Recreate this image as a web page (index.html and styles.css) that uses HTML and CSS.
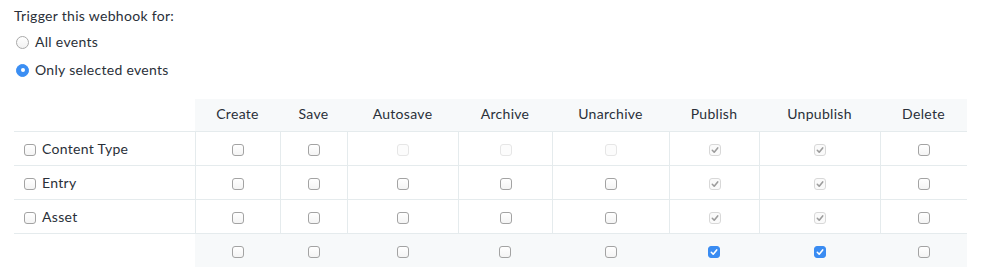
FILE: index.html
```html
<!DOCTYPE html>
<html>
<head>
<meta charset="utf-8">
<link rel="stylesheet" href="styles.css">
</head>
<body>
<div class="page">
  <div class="title">Trigger this webhook for:</div>
  <div class="radios">
    <label class="radio-row"><span class="radio"></span>All events</label>
    <label class="radio-row"><span class="radio on"></span>Only selected events</label>
  </div>
  <table class="grid">
    <colgroup>
      <col class="c-label"><col class="c-create"><col class="c-save"><col class="c-autosave"><col class="c-archive"><col class="c-unarchive"><col class="c-publish"><col class="c-unpublish"><col class="c-delete">
    </colgroup>
    <thead>
      <tr>
        <th class="blank"></th>
        <th>Create</th><th>Save</th><th>Autosave</th><th>Archive</th><th>Unarchive</th><th>Publish</th><th>Unpublish</th><th>Delete</th>
      </tr>
    </thead>
    <tbody>
      <tr>
        <td class="name"><span class="cb"></span>Content Type</td>
        <td><span class="cb"></span></td>
        <td><span class="cb"></span></td>
        <td><span class="cb dis"></span></td>
        <td><span class="cb dis"></span></td>
        <td><span class="cb dis"></span></td>
        <td><span class="cb dchk"><svg viewBox="0 0 12 12"><path d="M3.3 6.3 L5.2 8.2 L8.7 3.9"/></svg></span></td>
        <td><span class="cb dchk"><svg viewBox="0 0 12 12"><path d="M3.3 6.3 L5.2 8.2 L8.7 3.9"/></svg></span></td>
        <td><span class="cb"></span></td>
      </tr>
      <tr>
        <td class="name"><span class="cb"></span>Entry</td>
        <td><span class="cb"></span></td>
        <td><span class="cb"></span></td>
        <td><span class="cb"></span></td>
        <td><span class="cb"></span></td>
        <td><span class="cb"></span></td>
        <td><span class="cb dchk"><svg viewBox="0 0 12 12"><path d="M3.3 6.3 L5.2 8.2 L8.7 3.9"/></svg></span></td>
        <td><span class="cb dchk"><svg viewBox="0 0 12 12"><path d="M3.3 6.3 L5.2 8.2 L8.7 3.9"/></svg></span></td>
        <td><span class="cb"></span></td>
      </tr>
      <tr>
        <td class="name"><span class="cb"></span>Asset</td>
        <td><span class="cb"></span></td>
        <td><span class="cb"></span></td>
        <td><span class="cb"></span></td>
        <td><span class="cb"></span></td>
        <td><span class="cb"></span></td>
        <td><span class="cb dchk"><svg viewBox="0 0 12 12"><path d="M3.3 6.3 L5.2 8.2 L8.7 3.9"/></svg></span></td>
        <td><span class="cb dchk"><svg viewBox="0 0 12 12"><path d="M3.3 6.3 L5.2 8.2 L8.7 3.9"/></svg></span></td>
        <td><span class="cb"></span></td>
      </tr>
      <tr class="foot">
        <td class="name"></td>
        <td><span class="cb"></span></td>
        <td><span class="cb"></span></td>
        <td><span class="cb"></span></td>
        <td><span class="cb"></span></td>
        <td><span class="cb"></span></td>
        <td><span class="cb chk"><svg viewBox="0 0 12 12"><path d="M3.3 6.3 L5.2 8.2 L8.7 3.9"/></svg></span></td>
        <td><span class="cb chk"><svg viewBox="0 0 12 12"><path d="M3.3 6.3 L5.2 8.2 L8.7 3.9"/></svg></span></td>
        <td><span class="cb"></span></td>
      </tr>
    </tbody>
  </table>
</div>
</body>
</html>
```
FILE: styles.css
```css
html, body {
  margin: 0;
  padding: 0;
  background: #ffffff;
}
body {
  font-family: Lato, "Open Sans", "Liberation Sans", sans-serif;
  font-size: 14px;
  letter-spacing: 0.3px;
  color: #2a3039;
}
.page {
  padding: 6px 17px 0 14px;
}
.title {
  line-height: 20px;
  height: 20px;
}
.radios {
  display: flex;
  flex-direction: column;
  gap: 8px;
  margin-top: 6px;
}
.radio-row {
  display: flex;
  align-items: center;
  gap: 6px;
  line-height: 20px;
  height: 20px;
}
.radio {
  box-sizing: border-box;
  width: 13px;
  height: 13px;
  margin-left: 2px;
  border-radius: 50%;
  border: 1px solid #a9a9a9;
  background: linear-gradient(#ffffff, #f2f2f2);
  display: flex;
  align-items: center;
  justify-content: center;
}
.radio.on {
  border-color: #3b8ef3;
  background: #3b8ef3;
}
.radio.on::after {
  content: "";
  width: 4px;
  height: 4px;
  border-radius: 50%;
  background: #ffffff;
}
.grid {
  margin-top: 19px;
  width: 953px;
  table-layout: fixed;
  border-collapse: separate;
  border-spacing: 0;
}
.c-label { width: 181px; }
.c-create { width: 85px; }
.c-save { width: 67px; }
.c-autosave { width: 111px; }
.c-archive { width: 94px; }
.c-unarchive { width: 117px; }
.c-publish { width: 90px; }
.c-unpublish { width: 121px; }
.c-delete { width: 87px; }
.grid th {
  height: 32px;
  padding: 0 0 2px;
  box-sizing: border-box;
  font-weight: normal;
  text-align: center;
  background: #f7f9fa;
  line-height: 30px;
}
.grid th.blank {
  background: #ffffff;
}
.grid td {
  box-sizing: border-box;
  height: 34px;
  padding: 0 0 1px;
  border-top: 1px solid #e5ebed;
  border-left: 1px solid #e5ebed;
  text-align: center;
  vertical-align: middle;
}
.grid td.name {
  border-left: none;
  text-align: left;
  padding-left: 10px;
}
.grid tr.foot td {
  border-left: none;
  background: #f7f9fa;
}
.grid tr.foot td.name {
  background: #ffffff;
}
.name .cb {
  margin-right: 6px;
}
.cb {
  box-sizing: border-box;
  display: inline-flex;
  vertical-align: middle;
  width: 12px;
  height: 12px;
  border: 1px solid #a3a3a3;
  border-radius: 3px;
  background: linear-gradient(#ffffff, #f4f4f4);
  position: relative;
  top: 0;
}
.cb svg {
  position: absolute;
  left: -1px;
  top: -1px;
  width: 12px;
  height: 12px;
  fill: none;
  stroke-width: 1.6;
  stroke-linecap: round;
  stroke-linejoin: round;
}
.cb.dis {
  border-color: #e6e6e6;
  background: #fcfcfc;
}
.cb.dchk {
  border-color: #d8d8d8;
  background: #fafafa;
}
.cb.dchk svg {
  stroke: #9c9c9c;
}
.cb.chk {
  border-color: #3a8cf2;
  background: #3a8cf2;
}
.cb.chk svg {
  stroke: #ffffff;
}
```
